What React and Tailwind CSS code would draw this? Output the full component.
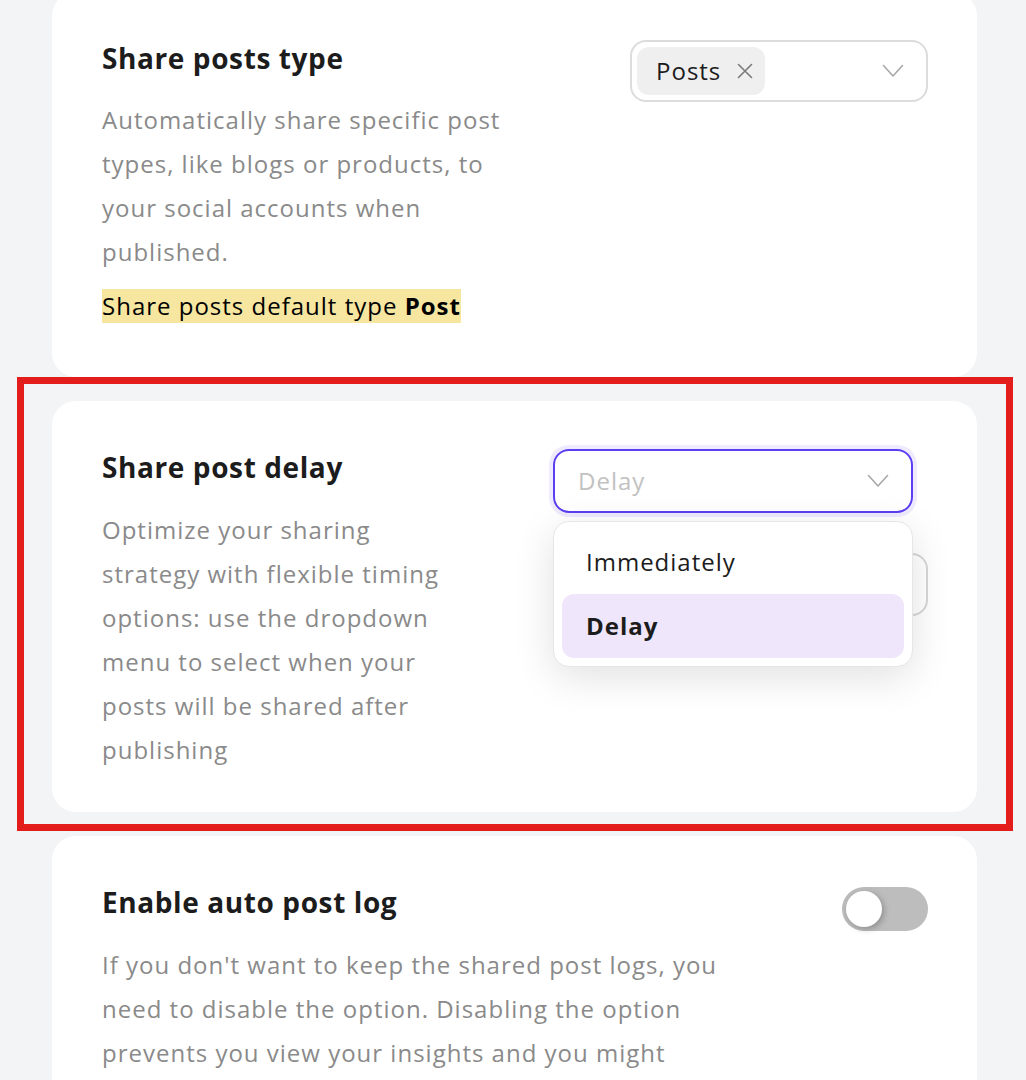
import React from 'react';

function Chevron({ className }) {
  return (
    <svg className={className} width="22" height="14" viewBox="0 0 22 14" fill="none">
      <polyline points="1.5,1.5 11,12 20.5,1.5" stroke="currentColor" strokeWidth="1.6" strokeLinejoin="round" strokeLinecap="round" />
    </svg>
  );
}

function Cross() {
  return (
    <svg width="16" height="16" viewBox="0 0 16 16" fill="none">
      <path d="M1.5 1.5 L14.5 14.5 M14.5 1.5 L1.5 14.5" stroke="#7a7a7a" strokeWidth="1.6" strokeLinecap="round" />
    </svg>
  );
}

function App() {
  return (
    <div className="min-h-[1080px] bg-[#f3f4f6] pl-[52px] pr-[49px] overflow-hidden font-['Open_Sans',sans-serif]">
      <div className="flex flex-col gap-6 -mt-2">
        {/* Share posts type */}
        <div className="bg-white rounded-[24px] pl-[50px] pr-[49px] pt-[48px] pb-[54px] flex gap-24">
          <div className="flex-1">
            <h2 className="text-[28px] leading-9 font-bold tracking-[0.6px] text-[#1c1c1c]">Share posts type</h2>
            <p className="mt-[22px] text-[24px] leading-[44px] tracking-[1px] text-[#8a8a8a]">
              Automatically share specific post types, like blogs or products, to your social accounts when published.
            </p>
            <p className="mt-[15px]">
              <span className="inline-block bg-[#f6e6a0] text-[24px] leading-[34px] tracking-[1px] text-black">
                Share posts default type <b>Post</b>
              </span>
            </p>
          </div>
          <div className="w-[298px] shrink-0">
            <div className="h-[62px] border-2 border-[#dcdcdc] rounded-[16px] flex items-center pl-[5px] pr-[22px]">
              <div className="h-12 bg-[#efefef] rounded-[12px] flex items-center gap-4 pl-[19px] pr-3">
                <span className="text-[24px] tracking-[1px] text-[#1c1c1c]">Posts</span>
                <Cross />
              </div>
              <div className="flex-1" />
              <Chevron className="text-[#a8a8a8]" />
            </div>
          </div>
        </div>

        {/* Share post delay */}
        <div className="relative">
          <div className="absolute -left-[35px] -right-[36px] -top-[24px] -bottom-[19px] border-[7px] border-[#e31c1c] pointer-events-none" />
          <div className="bg-white rounded-[24px] pl-[50px] pr-[49px] pt-[48px] pb-[40px] flex gap-24">
            <div className="flex-1">
              <h2 className="text-[28px] leading-9 font-bold tracking-[0.6px] text-[#1c1c1c]">Share post delay</h2>
              <p className="mt-[23px] text-[24px] leading-[44px] tracking-[1px] text-[#8a8a8a]">
                Optimize your sharing strategy with flexible timing options: use the dropdown menu to select when your posts will be shared after publishing
              </p>
            </div>
            <div className="w-[375px] shrink-0 relative">
              <div className="w-[360px] h-16 border-2 border-[#5b3ff2] ring-4 ring-[#efeafd] rounded-[16px] flex items-center pl-[23px] pr-[22px]">
                <span className="flex-1 text-[24px] tracking-[1px] text-[#c2c2c2]">Delay</span>
                <Chevron className="text-[#a8a8a8]" />
              </div>
              <div className="mt-10 h-[63px] border-2 border-[#d6d6d6] rounded-[16px]" />
              <div className="absolute left-0 top-[72px] w-[360px] bg-white border border-[#e6e6e6] rounded-[16px] shadow-[0_10px_40px_rgba(0,0,0,0.12)] p-2">
                <div className="h-[64px] flex items-center pl-6 text-[24px] tracking-[1px] text-[#1c1c1c]">Immediately</div>
                <div className="h-[64px] flex items-center pl-6 text-[24px] tracking-[1px] font-bold text-[#1c1c1c] bg-[#efe6fb] rounded-[12px]">Delay</div>
              </div>
            </div>
          </div>
        </div>

        {/* Enable auto post log */}
        <div className="bg-white rounded-[24px] pl-[50px] pr-[49px] pt-[48px] pb-[40px] flex gap-24">
          <div className="flex-1">
            <h2 className="text-[28px] leading-9 font-bold tracking-[0.6px] text-[#1c1c1c]">Enable auto post log</h2>
            <p className="mt-[23px] max-w-[616px] text-[24px] leading-[44px] tracking-[1px] text-[#8a8a8a]">
              If you don't want to keep the shared post logs, you need to disable the option. Disabling the option prevents you view your insights and you might lose some important data.
            </p>
          </div>
          <div className="w-[86px] shrink-0 pt-[3px]">
            <div className="w-[86px] h-11 rounded-full bg-[#bdbdbd] flex items-center pl-1">
              <div className="w-9 h-9 rounded-full bg-white shadow-[2px_2px_6px_rgba(0,0,0,0.25)]" />
            </div>
          </div>
        </div>
      </div>
    </div>
  );
}

export default App;
